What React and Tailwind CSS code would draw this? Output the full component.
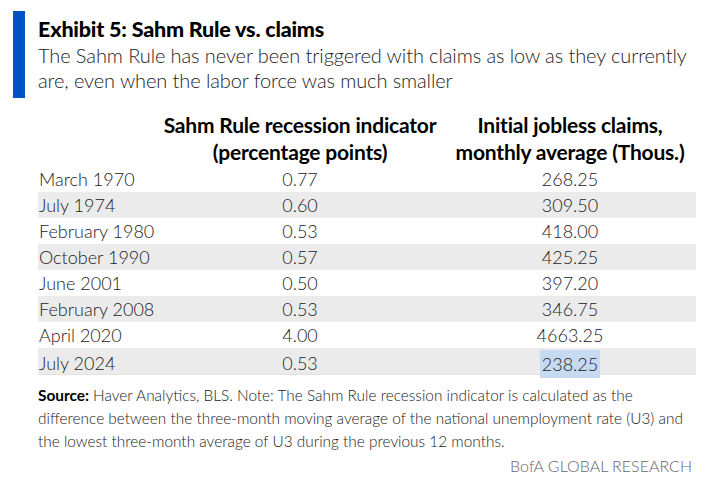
import React from 'react';

const rows = [
  ['March 1970', '0.77', '268.25'],
  ['July 1974', '0.60', '309.50'],
  ['February 1980', '0.53', '418.00'],
  ['October 1990', '0.57', '425.25'],
  ['June 2001', '0.50', '397.20'],
  ['February 2008', '0.53', '346.75'],
  ['April 2020', '4.00', '4663.25'],
  ['July 2024', '0.53', '238.25'],
];

export default function App() {
  return (
    <div
      className="w-[720px] h-[489px] bg-white text-[#222] overflow-hidden"
      style={{ fontFamily: 'Lato, "Open Sans", sans-serif' }}
    >
      {/* header */}
      <div className="flex pt-[11px] pl-[13px]">
        <div className="w-[12px] h-[87px] bg-[#0053c6]" />
        <div className="pl-[13px] pt-[6px]">
          <h1 className="text-[21.5px] leading-[25px] font-black text-black tracking-[-0.2px]">Exhibit 5: Sahm Rule vs. claims</h1>
          <p className="text-[20px] leading-[25px] font-light text-[#222] w-[660px] tracking-[-0.1px] mt-[1px]">
            The Sahm Rule has never been triggered with claims as low as they currently are, even when the labor force was much smaller
          </p>
        </div>
      </div>

      {/* table */}
      <div className="ml-[38px] w-[658px] mt-[13px]">
        <div className="grid grid-cols-[118px_288px_1fr] text-[21px] leading-[27px] font-bold text-black pb-[1px] tracking-[-0.2px]">
          <div />
          <div className="text-center">Sahm Rule recession indicator<br />(percentage points)</div>
          <div className="text-center">Initial jobless claims,<br />monthly average (Thous.)</div>
        </div>
        <div className="border-b border-[#e2e2e2]">
          {rows.map((r, i) => (
            <div
              key={r[0]}
              className={`grid grid-cols-[118px_288px_1fr] h-[26px] items-center text-[18px] font-light ${i % 2 === 1 ? 'bg-[#ebebeb]' : 'bg-white'}`}
            >
              <div className="pl-[1px] whitespace-nowrap">{r[0]}</div>
              <div className="text-center">{r[1]}</div>
              <div className="flex justify-center">
                {i === rows.length - 1 ? (
                  <span className="bg-[#c6daf2] px-[2px] h-[28px] mt-[2px] flex items-center">{r[2]}</span>
                ) : (
                  r[2]
                )}
              </div>
            </div>
          ))}
        </div>
      </div>

      {/* footnote */}
      <div className="ml-[38px] w-[660px] mt-[9px] text-[15.4px] leading-[23px] font-light text-[#222]">
        <p>
          <span className="font-bold text-black">Source:</span> Haver Analytics, BLS. Note: The Sahm Rule recession indicator is calculated as the difference between the three-month moving average of the national unemployment rate (U3) and the lowest three-month average of U3 during the previous 12 months.
        </p>
        <p className="text-right pr-[6px] mt-[1px] text-[16px] text-[#666]">BofA GLOBAL RESEARCH</p>
      </div>
    </div>
  );
}
